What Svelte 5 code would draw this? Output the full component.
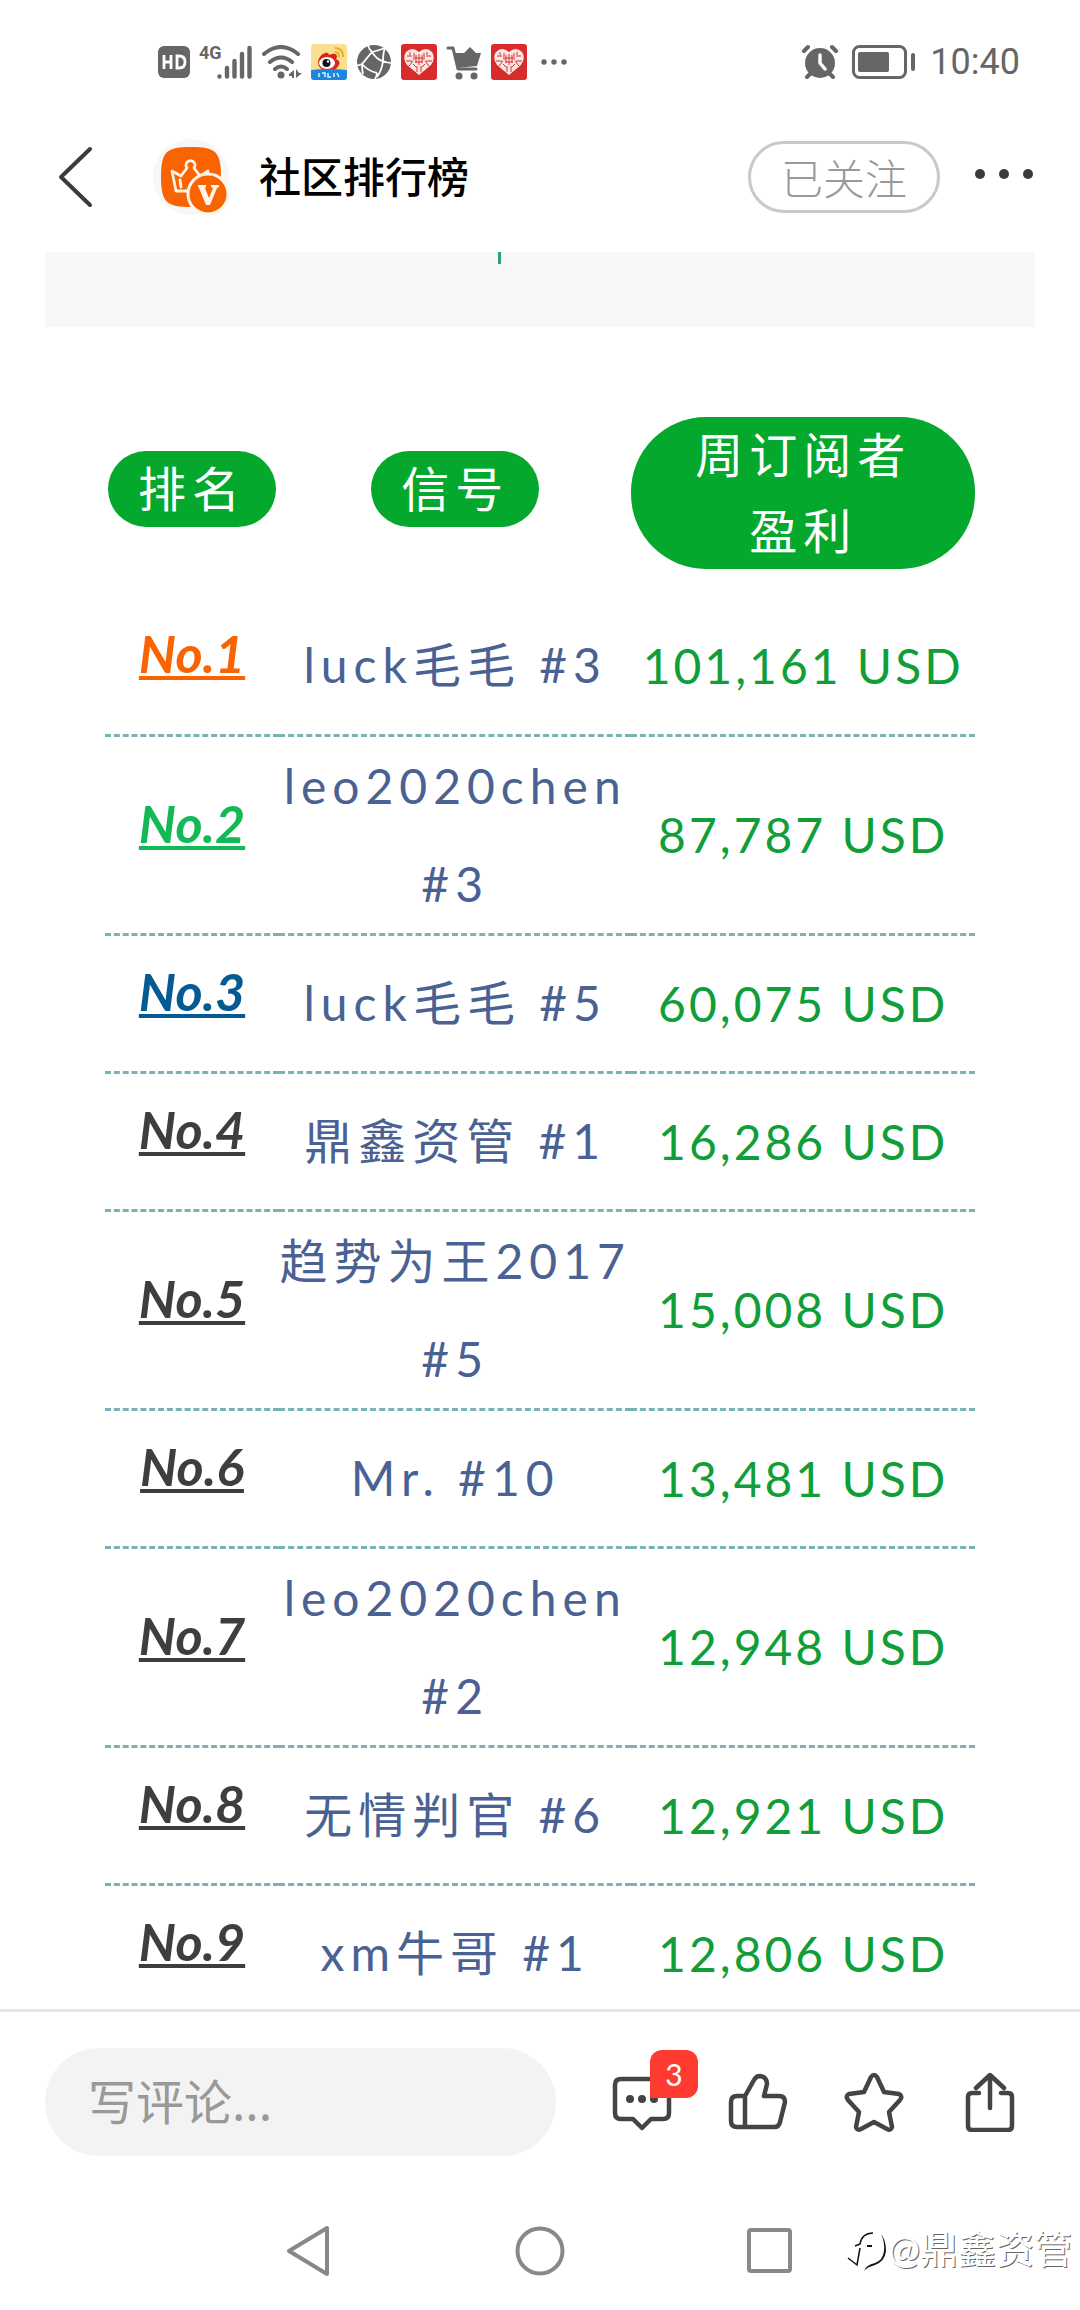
<script>
  const rows = [
    { rank: 1, name: "luck毛毛 #3", profit: "101,161", color: "#f96400" },
    { rank: 2, name: "leo2020chen #3", profit: "87,787", color: "#12b955" },
    { rank: 3, name: "luck毛毛 #5", profit: "60,075", color: "#065a94" },
    { rank: 4, name: "鼎鑫资管 #1", profit: "16,286" },
    { rank: 5, name: "趋势为王2017 #5", profit: "15,008" },
    { rank: 6, name: "Mr. #10", profit: "13,481" },
    { rank: 7, name: "leo2020chen #2", profit: "12,948" },
    { rank: 8, name: "无情判官 #6", profit: "12,921" },
    { rank: 9, name: "xm牛哥 #1", profit: "12,806" },
  ];

  const unread = 3;

  let comment = $state("");
  let followed = $state(true);
</script>

{#snippet heartApp()}
  <svg width="36" height="36" viewBox="0 0 36 36">
    <rect width="36" height="36" rx="3" fill="#d92b2b" />
    <path d="M18 31 6 21Q1 14 5 8q6-6 13 0 7-6 13 0 4 6-1 13z" fill="#fbe9e6" />
    <path
      d="M6 12h5M5 17h6M9 8v3M8 22l4-5M13 9v7M12 20l3 3M16 22v6M20 22v6M23 9v7M24 20l-3 3M26 8v3M25 12h5M25 17h6M28 22l-4-5M15 11v8M18 10v11M21 11v8M14 14h8M14 18h8"
      fill="none"
      stroke="#d92b2b"
      stroke-width="1"
    />
  </svg>
{/snippet}

<div class="screen">
  <div class="status">
    <div class="status-group">
      <svg width="32" height="32" viewBox="0 0 32 32">
        <rect width="32" height="32" rx="6" fill="#666" />
        <path d="M6 9v14M13 9v14M6 16h7M19 10v12h2q6 0 6-6t-6-6z" fill="none" stroke="#fff" stroke-width="2.8" />
      </svg>
      <div class="signal">
        <span>4G</span>
        <svg width="36" height="34" viewBox="0 0 36 34">
          <path d="M2.500 31.500v0M10 23v8.500M17.500 16v15.500M25 9v22.500M32.500 3v28.500" stroke="#666" stroke-width="4.400" stroke-linecap="round" />
        </svg>
      </div>
      <svg width="40" height="34" viewBox="0 0 40 34">
        <g fill="none" stroke="#666" stroke-width="4" stroke-linecap="round">
          <path d="M2 9q17-14 34 0M8 17q11-9 22 0M13 24q6-5 12 0" />
        </g>
        <circle cx="19" cy="30" r="3.500" fill="#666" />
        <path d="M32 25v8h-2v-2h-3v-2zM34 24v9l6-5h-3z" fill="#666" />
      </svg>
      <svg width="36" height="36" viewBox="0 0 36 36">
        <rect width="36" height="36" rx="3" fill="#fae08e" />
        <path d="M7 18q1-7 7-9 4-1 4 2 7-3 8 1 0 2-1 3 5 2 3 6-3 6-11 6-10-1-10-9z" fill="#d9251d" />
        <ellipse cx="16" cy="19" rx="8" ry="6" fill="#fff" />
        <circle cx="15.500" cy="19" r="4" fill="#111" />
        <circle cx="17" cy="17.500" r="1.200" fill="#fff" />
        <path d="M24 8q4 0 4 5M24 4q8 0 8 9" fill="none" stroke="#eda72f" stroke-width="2" />
        <path d="M0 26q18-2 36 0v7q0 3-3 3H3q-3 0-3-3z" fill="#1a86e0" />
        <path d="M8 29v4M11 29h3v4M17 29v4h3M23 29v4M26 29l2 4" stroke="#dff0ff" stroke-width="1.500" fill="none" />
      </svg>
      <svg width="36" height="36" viewBox="0 0 36 36">
        <circle cx="18" cy="18" r="17" fill="#666" />
        <path d="M12 0q0 4 4 8M16 8q8-2 13-4M16 8 6 20q-4 2-6 1M16 8q5 8 11 9M27 17q0-8 2-13M27 17q-1 9-6 16M27 17q4 2 9 2M6 20q6 7 15 9M6 20q0 6 1 10M21 29q0 3-2 6" fill="none" stroke="#fff" stroke-width="1.800" />
      </svg>
      {@render heartApp()}
      <svg width="36" height="36" viewBox="0 0 36 36">
        <path d="M2 4h5l5 21h18" fill="none" stroke="#666" stroke-width="3" stroke-linecap="round" stroke-linejoin="round" />
        <path d="M8 9h10l6-6 6 6h5l-4 13-20 2z" fill="#666" />
        <circle cx="13" cy="32" r="3.500" fill="#666" />
        <circle cx="28" cy="32" r="3.500" fill="#666" />
      </svg>
      {@render heartApp()}
      <svg class="more" width="28" height="8" viewBox="0 0 28 8" fill="#666">
        <circle cx="4" cy="4" r="2.700" />
        <circle cx="14" cy="4" r="2.700" />
        <circle cx="24" cy="4" r="2.700" />
      </svg>
    </div>
    <div class="status-group right">
      <svg width="36" height="36" viewBox="0 0 36 36">
        <circle cx="18" cy="19" r="15" fill="#666" />
        <path d="M2 7l4-4M34 7l-4-4M5 33l4-4M31 33l-4-4" stroke="#666" stroke-width="4" stroke-linecap="round" />
        <path d="M18 11v8l5 6" fill="none" stroke="#fff" stroke-width="3.500" stroke-linecap="round" stroke-linejoin="round" />
      </svg>
      <svg width="64" height="34" viewBox="0 0 64 34">
        <rect x="1.500" y="1.500" width="52" height="31" rx="6" fill="none" stroke="#666" stroke-width="3" />
        <rect x="6" y="7" width="31" height="20" rx="2" fill="#666" />
        <path d="M61 10v14" stroke="#666" stroke-width="4" stroke-linecap="round" />
      </svg>
      <time>10:40</time>
    </div>
  </div>

  <header>
    <button class="plain" type="button" aria-label="返回">
      <svg width="36" height="62" viewBox="0 0 36 62">
        <path d="M32 3 3 31l29 28" fill="none" stroke="#3b3b3b" stroke-width="4" stroke-linecap="round" stroke-linejoin="round" />
      </svg>
    </button>
    <svg class="avatar" width="78" height="78" viewBox="0 0 78 78">
      <circle cx="39" cy="39" r="38" fill="#f7f7f7" />
      <path d="M39 9c24 0 30 4 30 30s-6 30-30 30S9 65 9 39 15 9 39 9z" fill="#f96400" />
      <path d="M24 53 20 33l9 5 6-8a4.500 4.500 0 1 1 7 0l6 8 8-5-4 20zM28 42l1 7" fill="none" stroke="#fff3e8" stroke-width="2.800" stroke-linejoin="round" stroke-linecap="round" />
      <circle cx="56" cy="56" r="20" fill="#f96400" stroke="#fff5ec" stroke-width="3" />
      <path d="M46 47h8v2l-1 1 4 10 4-10-2-1v-2h8v2l-2 1-7 17h-4l-7-17-1-1z" fill="#fff5ec" />
    </svg>
    <h1>社区排行榜</h1>
    <button class="follow" type="button" onclick={() => (followed = !followed)}>
      {followed ? "已关注" : "关注"}
    </button>
    <button class="plain" type="button" aria-label="更多">
      <svg width="60" height="18" viewBox="0 0 60 18" fill="#3b3b3b">
        <circle cx="6" cy="6" r="5" />
        <circle cx="30" cy="6" r="5" />
        <circle cx="54" cy="6" r="5" />
      </svg>
    </button>
  </header>

  <main>
    <div class="banner"><span></span></div>

    <table>
      <thead>
        <tr>
          <th class="col-rank"><span class="pill">排名</span></th>
          <th class="col-name"><span class="pill">信号</span></th>
          <th class="col-profit"><span class="pill wide">周订阅者盈利</span></th>
        </tr>
      </thead>
      <tbody>
        {#each rows as row}
          <tr>
            <td class="rank" style:color={row.color}>No.{row.rank}</td>
            <td class="name">{row.name}</td>
            <td class="profit">{row.profit} USD</td>
          </tr>
        {/each}
      </tbody>
    </table>
  </main>

  <footer>
    <input type="text" aria-label="写评论" placeholder="写评论..." bind:value={comment} />
    <div class="actions">
      <button class="plain" type="button" aria-label="评论">
        <svg width="60" height="60" viewBox="0 0 60 60">
          <path d="M9 7h42q6 0 6 6v28q0 6-6 6H39l-9 9-9-9H9q-6 0-6-6V13q0-6 6-6z" fill="none" stroke="#444" stroke-width="4.500" stroke-linejoin="round" />
          <g fill="#444">
            <circle cx="18" cy="27" r="4" />
            <circle cx="30" cy="27" r="4" />
            <circle cx="42" cy="27" r="4" />
          </g>
        </svg>
        <span class="badge">{unread}</span>
      </button>
      <button class="plain" type="button" aria-label="点赞">
        <svg width="60" height="60" viewBox="0 0 60 60">
          <path d="M17 24v31M9 24h8L26 8q2-4 6-4 7 1 7 8l-3 12h15q6 0 6 6l-5 20q-1 5-6 5H9q-6 0-6-6V30q0-6 6-6z" fill="none" stroke="#444" stroke-width="4.500" stroke-linejoin="round" />
        </svg>
      </button>
      <button class="plain" type="button" aria-label="收藏">
        <svg width="60" height="60" viewBox="0 0 60 60">
          <path d="M27 5q3-4 6 0l7 15 15 2q4 2 1 6L45 40l3 15q-1 4-5 2l-13-7-13 7q-4 2-5-2l3-15L4 28q-3-4 1-6l15-2z" fill="none" stroke="#444" stroke-width="4.500" stroke-linejoin="round" />
        </svg>
      </button>
      <button class="plain" type="button" aria-label="分享">
        <svg width="60" height="60" viewBox="0 0 60 60">
          <path d="M19 21h-7q-4 0-4 4v29q0 4 4 4h36q4 0 4-4V25q0-4-4-4h-7M30 36V4M16 16 30 3l14 13" fill="none" stroke="#444" stroke-width="4.500" stroke-linejoin="round" stroke-linecap="round" />
        </svg>
      </button>
    </div>
  </footer>

  <nav>
    <button class="plain" type="button" aria-label="系统返回">
      <svg width="50" height="54" viewBox="0 0 50 54">
        <path d="M42 4v46L4 27z" fill="none" stroke="#888" stroke-width="4" stroke-linejoin="round" />
      </svg>
    </button>
    <button class="plain" type="button" aria-label="主屏幕">
      <svg width="50" height="54" viewBox="0 0 50 54">
        <circle cx="25" cy="27" r="22.500" fill="none" stroke="#888" stroke-width="4" />
      </svg>
    </button>
    <button class="plain" type="button" aria-label="最近任务">
      <svg width="50" height="54" viewBox="0 0 50 54">
        <rect x="4" y="6" width="41" height="41" rx="2" fill="none" stroke="#888" stroke-width="4" />
      </svg>
    </button>
    <div class="watermark">
      <svg width="42" height="48" viewBox="0 0 42 48">
        <path d="M2 34 11 41 14 24M9 22l5-2q2-11 13-11" fill="none" stroke="#111" stroke-width="1.500" />
        <path d="M21 22h5" stroke="#111" stroke-width="2" />
        <path d="M35 10q4 8 3 17-1 9-9 12-9 2-11 8 3-4 11-6 10-4 11-14 0-11-5-17z" fill="#111" />
      </svg>
      <span>@鼎鑫资管</span>
    </div>
  </nav>
</div>

<style>
  :global(body) {
    margin: 0;
    background: #fff;
  }
  .screen {
    height: 100vh;
    display: flex;
    flex-direction: column;
    overflow: hidden;
    background: #fff;
    font-family: Lato, "Noto Sans CJK SC", sans-serif;
  }
  .plain {
    position: relative;
    display: flex;
    padding: 0;
    border: 0;
    background: none;
    cursor: pointer;
  }

  /* status bar */
  .status {
    display: flex;
    justify-content: space-between;
    padding: 36px 60px 0 158px;
    height: 84px;
    box-sizing: border-box;
  }
  .status-group {
    display: flex;
    align-items: center;
    gap: 9px;
    height: 52px;
  }
  .status-group.right {
    gap: 14px;
  }
  .status-group .more {
    margin-left: 4px;
  }
  .signal {
    display: flex;
    align-items: flex-end;
    width: 54px;
    justify-content: space-between;
  }
  .signal span {
    align-self: flex-start;
    width: 18px;
    font-family: "Liberation Sans Narrow", Roboto, sans-serif;
    font-size: 18px;
    line-height: 16px;
    font-weight: 700;
    color: #666;
  }
  time {
    font-family: Roboto, sans-serif;
    font-size: 36px;
    line-height: 52px;
    color: #666;
  }

  header {
    display: flex;
    align-items: center;
    height: 168px;
    padding: 18px 46px 0 58px;
    box-sizing: border-box;
  }
  .avatar {
    margin-left: 58px;
  }
  h1 {
    flex: 1;
    margin: 0 0 0 29px;
    font-size: 42px;
    line-height: 56px;
    font-weight: 500;
    color: #000;
  }
  .follow {
    width: 192px;
    height: 72px;
    margin-right: 34px;
    border: 3px solid #c9c9c9;
    border-radius: 36px;
    background: #fff;
    color: #999;
    font-family: "Noto Sans CJK SC", sans-serif;
    font-size: 42px;
    font-weight: 300;
    line-height: 60px;
    padding: 0;
  }

  main {
    flex: 1;
    min-height: 0;
    overflow: hidden;
  }
  .banner {
    height: 75px;
    margin: 0 45px;
    padding-right: 82px;
    background: #f7f7f7;
  }
  .banner span {
    display: block;
    width: 3px;
    height: 12px;
    margin: 0 auto;
    background: #2ca36c;
  }

  table {
    width: calc(100% - 210px);
    margin: 90px 105px 0;
    border-collapse: collapse;
    table-layout: fixed;
    font-size: 48px;
    text-align: center;
  }
  .col-rank {
    width: 20%;
  }
  .col-profit {
    width: 39.5%;
  }
  th {
    padding: 0 0 28px;
    font-weight: 400;
  }
  th:not(.col-profit) {
    padding-bottom: 36px;
  }
  td {
    height: 138px;
    padding: 0;
    box-sizing: border-box;
    border-bottom: 3px dashed #7ab3b5;
  }
  .pill {
    display: inline-block;
    padding: 0 30px;
    border-radius: 75px;
    background: #04a82c;
    color: #fff;
    letter-spacing: 6px;
    line-height: 76px;
    vertical-align: top;
  }
  .pill.wide {
    display: block;
    padding: 0 60px;
  }
  .rank {
    padding-bottom: 24px;
    color: #3e3e3e;
    font-size: 52px;
    font-weight: 700;
    font-style: italic;
    text-decoration: underline;
    text-decoration-thickness: 4px;
    text-decoration-skip-ink: none;
    text-underline-offset: 3px;
  }
  .name {
    color: #4a6293;
    letter-spacing: 6px;
    line-height: 98px;
  }
  .profit {
    color: #109e39;
    letter-spacing: 3px;
  }

  footer {
    display: flex;
    align-items: center;
    gap: 56px;
    padding: 36px 60px 40px 45px;
    border-top: 3px solid #e5e5e5;
  }
  input {
    flex: 1;
    min-width: 0;
    height: 108px;
    padding: 0 43px 6px;
    box-sizing: border-box;
    border: 0;
    border-radius: 54px;
    background: #f3f3f3;
    font-family: "Noto Sans CJK SC", sans-serif;
    font-size: 48px;
    color: #333;
  }
  input::placeholder {
    color: #999;
    opacity: 1;
  }
  .actions {
    display: flex;
    gap: 56px;
  }
  .badge {
    position: absolute;
    top: -22px;
    left: 38px;
    width: 48px;
    height: 48px;
    border-radius: 12px 12px 12px 0;
    background: #ff3a30;
    color: #fff;
    font-family: Lato, sans-serif;
    font-size: 30px;
    line-height: 48px;
    text-align: center;
  }

  nav {
    position: relative;
    display: flex;
    justify-content: center;
    gap: 180px;
    padding: 28px 0 32px;
  }
  .watermark {
    position: absolute;
    right: 8px;
    bottom: 36px;
    display: flex;
    align-items: center;
    color: #fff;
    font-size: 38px;
    line-height: 52px;
    text-shadow: 1px 1px 0 #666;
  }
</style>
